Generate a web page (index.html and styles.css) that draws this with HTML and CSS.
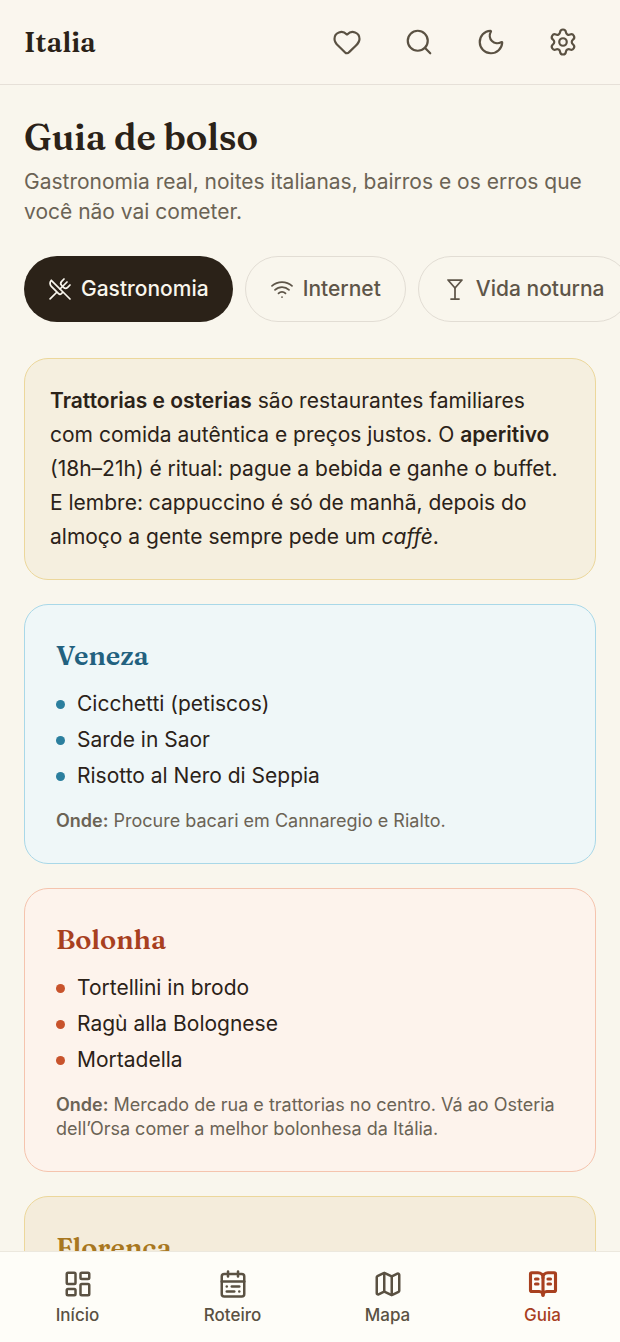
FILE: index.html
```html
<!DOCTYPE html>
<html lang="pt-BR">
<head>
    <meta charset="UTF-8">
    <meta name="viewport" content="width=device-width, initial-scale=1">
    <title>Italia</title>
    <link rel="stylesheet" href="styles.css">
</head>
<body>

<header class="topbar">
    <a class="brand" href="#">Italia</a>
    <div class="actions">
        <button class="icon-btn" type="button" aria-label="Favoritos">
            <svg class="icon" viewBox="0 0 24 24"><path d="M2 9.5a5.5 5.5 0 0 1 9.591-3.676.56.56 0 0 0 .818 0A5.49 5.49 0 0 1 22 9.5c0 2.29-1.5 4-3 5.5l-5.492 5.313a2 2 0 0 1-3 .019L5 15c-1.5-1.5-3-3.2-3-5.5"/></svg>
        </button>
        <button class="icon-btn" type="button" aria-label="Buscar">
            <svg class="icon" viewBox="0 0 24 24"><path d="m21 21-4.34-4.34"/><circle cx="11" cy="11" r="8"/></svg>
        </button>
        <button class="icon-btn" type="button" aria-label="Tema escuro">
            <svg class="icon" viewBox="0 0 24 24"><path d="M20.985 12.486a9 9 0 1 1-9.473-9.472c.405-.022.617.46.402.803a6 6 0 0 0 8.268 8.268c.344-.215.825-.004.803.401"/></svg>
        </button>
        <button class="icon-btn" type="button" aria-label="Ajustes">
            <svg class="icon" viewBox="0 0 24 24"><path d="M9.671 4.136a2.34 2.34 0 0 1 4.659 0 2.34 2.34 0 0 0 3.319 1.915 2.34 2.34 0 0 1 2.33 4.033 2.34 2.34 0 0 0 0 3.831 2.34 2.34 0 0 1-2.33 4.033 2.34 2.34 0 0 0-3.319 1.915 2.34 2.34 0 0 1-4.659 0 2.34 2.34 0 0 0-3.32-1.915 2.34 2.34 0 0 1-2.33-4.033 2.34 2.34 0 0 0 0-3.831A2.34 2.34 0 0 1 6.35 6.051a2.34 2.34 0 0 0 3.319-1.915"/><circle cx="12" cy="12" r="3"/></svg>
        </button>
    </div>
</header>

<main class="page">
    <h1 class="title">Guia de bolso</h1>
    <p class="subtitle">Gastronomia real, noites italianas, bairros e os erros que você não vai cometer.</p>

    <div class="chips">
        <button class="chip active" type="button">
            <svg class="icon" viewBox="0 0 24 24"><path d="m16 2-2.3 2.3a3 3 0 0 0 0 4.2l1.8 1.8a3 3 0 0 0 4.2 0L22 8"/><path d="M15 15 3.3 3.3a4.2 4.2 0 0 0 0 6l7.3 7.3c.7.7 2 .7 2.8 0L15 15Zm0 0 7 7"/><path d="m2.1 21.8 6.4-6.3"/><path d="m19 5-7 7"/></svg>
            Gastronomia
        </button>
        <button class="chip" type="button">
            <svg class="icon" viewBox="0 0 24 24"><path d="M12 20h.01"/><path d="M2 8.82a15 15 0 0 1 20 0"/><path d="M5 12.859a10 10 0 0 1 14 0"/><path d="M8.5 16.429a5 5 0 0 1 7 0"/></svg>
            Internet
        </button>
        <button class="chip" type="button">
            <svg class="icon" viewBox="0 0 24 24"><path d="M8 22h8"/><path d="M12 11v11"/><path d="m19 3-7 8-7-8Z"/></svg>
            Vida noturna
        </button>
    </div>

    <div class="cards">
        <section class="card intro">
            <p><strong>Trattorias e osterias</strong> são restaurantes familiares com comida autêntica e preços justos. O <strong>aperitivo</strong> (18h–21h) é ritual: pague a bebida e ganhe o buffet. E lembre: cappuccino é só de manhã, depois do almoço a gente sempre pede um <em>caffè</em>.</p>
        </section>

        <section class="card city veneza">
            <h2>Veneza</h2>
            <ul>
                <li>Cicchetti (petiscos)</li>
                <li>Sarde in Saor</li>
                <li>Risotto al Nero di Seppia</li>
            </ul>
            <p class="where"><strong>Onde:</strong> Procure bacari em Cannaregio e Rialto.</p>
        </section>

        <section class="card city bolonha">
            <h2>Bolonha</h2>
            <ul>
                <li>Tortellini in brodo</li>
                <li>Ragù alla Bolognese</li>
                <li>Mortadella</li>
            </ul>
            <p class="where"><strong>Onde:</strong> Mercado de rua e trattorias no centro. Vá ao Osteria dell’Orsa comer a melhor bolonhesa da Itália.</p>
        </section>

        <section class="card city florenca">
            <h2>Florença</h2>
        </section>
    </div>
</main>

<nav class="tabbar">
    <a class="tab" href="#">
        <svg class="icon" viewBox="0 0 24 24"><rect width="7" height="9" x="3" y="3" rx="1"/><rect width="7" height="5" x="14" y="3" rx="1"/><rect width="7" height="9" x="14" y="12" rx="1"/><rect width="7" height="5" x="3" y="16" rx="1"/></svg>
        Início
    </a>
    <a class="tab" href="#">
        <svg class="icon" viewBox="0 0 24 24"><rect width="18" height="18" x="3" y="4" rx="2"/><path d="M16 2v4"/><path d="M3 10h18"/><path d="M8 2v4"/><path d="M17 14h-6"/><path d="M13 18H7"/><path d="M7 14h.01"/><path d="M17 18h.01"/></svg>
        Roteiro
    </a>
    <a class="tab" href="#">
        <svg class="icon" viewBox="0 0 24 24"><path d="M14.106 5.553a2 2 0 0 0 1.788 0l3.659-1.83A1 1 0 0 1 21 4.619v12.764a1 1 0 0 1-.553.894l-4.553 2.277a2 2 0 0 1-1.788 0l-4.212-2.106a2 2 0 0 0-1.788 0l-3.659 1.83A1 1 0 0 1 3 19.381V6.618a1 1 0 0 1 .553-.894l4.553-2.277a2 2 0 0 1 1.788 0z"/><path d="M15 5.764v15"/><path d="M9 3.236v15"/></svg>
        Mapa
    </a>
    <a class="tab active" href="#" aria-current="page">
        <svg class="icon" viewBox="0 0 24 24"><path d="M12 7v14"/><path d="M16 12h2"/><path d="M16 8h2"/><path d="M3 18a1 1 0 0 1-1-1V4a1 1 0 0 1 1-1h5a4 4 0 0 1 4 4 4 4 0 0 1 4-4h5a1 1 0 0 1 1 1v13a1 1 0 0 1-1 1h-6a3 3 0 0 0-3 3 3 3 0 0 0-3-3z"/><path d="M6 12h2"/><path d="M6 8h2"/></svg>
        Guia
    </a>
</nav>

</body>
</html>
```
FILE: styles.css
```css
* {
    box-sizing: border-box;
    margin: 0;
    padding: 0;
}

body {
    background-color: #f9f6ed;
    color: #2b2218;
    font-family: Inter, "Liberation Sans", sans-serif;
    font-size: 21px;
    line-height: 30px;
}

a {
    color: inherit;
    text-decoration: none;
}

button {
    font: inherit;
    color: inherit;
    background: none;
    border: none;
    cursor: pointer;
}

strong {
    font-weight: 600;
}

.icon {
    display: block;
    flex-shrink: 0;
    width: 30px;
    height: 30px;
    fill: none;
    stroke: currentColor;
    stroke-width: 1.75;
    stroke-linecap: round;
    stroke-linejoin: round;
}

/* topbar */
.topbar {
    position: sticky;
    top: 0;
    z-index: 1;
    display: flex;
    align-items: center;
    justify-content: space-between;
    padding: 9px 24px;
    background-color: #faf6ee;
    border-bottom: 1px solid #e6e0d8;
}

.brand {
    font-family: Fraunces, "Liberation Serif", serif;
    font-size: 28px;
    font-weight: 600;
}

.actions {
    display: flex;
    gap: 6px;
    color: #5a5142;
}

.icon-btn {
    display: flex;
    align-items: center;
    justify-content: center;
    width: 66px;
    height: 66px;
}

/* page */
.page {
    padding: 30px 24px 24px;
}

.title {
    margin-bottom: 7px;
    font-family: Fraunces, "Liberation Serif", serif;
    font-size: 36px;
    font-weight: 600;
    line-height: 45px;
}

.subtitle {
    color: #6b6355;
}

.chips {
    display: flex;
    gap: 12px;
    margin: 29px -24px 36px 0;
    overflow-x: auto;
    scrollbar-width: none;
}

.chip {
    display: flex;
    flex-shrink: 0;
    align-items: center;
    gap: 9px;
    height: 66px;
    padding: 0 24px;
    border: 1px solid #e2ddd4;
    border-radius: 33px;
    color: #5e5548;
    font-weight: 500;
    white-space: nowrap;
}

.chip .icon {
    width: 24px;
    height: 24px;
}

.chip.active {
    background-color: #2b2218;
    border: none;
    color: #f9f6ed;
}

/* cards */
.cards {
    display: flex;
    flex-direction: column;
    gap: 24px;
}

.card {
    border: 1px solid;
    border-radius: 24px;
}

.intro {
    padding: 25px;
    background-color: #f5efdf;
    border-color: #ecd79b;
    line-height: 34px;
}

.city {
    padding: 31px 31px 30px;
}

.city h2 {
    font-family: Fraunces, "Liberation Serif", serif;
    font-size: 27px;
    font-weight: 600;
    line-height: 40px;
}

.city ul {
    display: flex;
    flex-direction: column;
    gap: 6px;
    margin: 13px 0 18px;
    list-style: none;
}

.city li {
    display: flex;
    align-items: center;
    gap: 12px;
}

.city li::before {
    content: "";
    width: 9px;
    height: 9px;
    border-radius: 50%;
    background-color: currentColor;
}

.where {
    color: #6b6355;
    font-size: 18px;
    line-height: 24px;
}

.veneza {
    background-color: #eff7f8;
    border-color: #a9d8e8;
}

.veneza h2 {
    color: #22617f;
}

.veneza li::before {
    background-color: #2b7f9e;
}

.bolonha {
    background-color: #fdf3ec;
    border-color: #f5c4ae;
}

.bolonha h2 {
    color: #a8401f;
}

.bolonha li::before {
    background-color: #c8532c;
}

.florenca {
    background-color: #f4ecdb;
    border-color: #ecd79b;
}

.florenca h2 {
    color: #a87720;
}

/* tabbar */
.tabbar {
    position: fixed;
    right: 0;
    bottom: 0;
    left: 0;
    z-index: 1;
    display: flex;
    background-color: #fefdf8;
    border-top: 1px solid #ece8de;
}

.tab {
    display: flex;
    flex: 1;
    flex-direction: column;
    align-items: center;
    gap: 6px;
    padding: 17px 0;
    color: #5a5142;
    font-size: 17px;
    font-weight: 500;
    line-height: 20px;
}

.tab .icon {
    stroke-width: 2;
}

.tab.active {
    color: #a8401f;
}

.tab.active .icon {
    stroke-width: 2.5;
}
```
